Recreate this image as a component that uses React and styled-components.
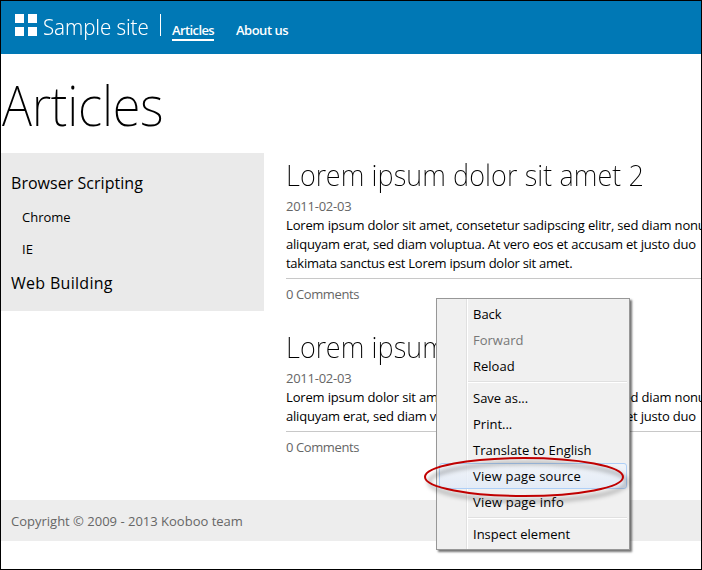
import React from "react";
import styled, { createGlobalStyle } from "styled-components";

const Global = createGlobalStyle`
  *{box-sizing:border-box}
  html,body{margin:0;padding:0}
  body{overflow:hidden;font-family:"Open Sans","Noto Sans",sans-serif;font-size:13px;color:#000}
  h1,h2,p,nav,ul,li{margin:0;padding:0;list-style:none}
`;

const Page = styled.div`
  position:relative;width:702px;height:570px;border:1px solid #000;background:#fff;overflow:hidden;
`;
const Header = styled.header`
  height:53px;background:#0078b5;color:#fff;display:flex;align-items:flex-start;padding:13px 0 0 14px;
`;
const Logo = styled.div`
  display:grid;grid-template-columns:9px 9px;grid-template-rows:9px 9px;gap:4px;
`;
const Tile = styled.i`background:#fff;`;
const SiteName = styled.span`
  width:117px;margin-left:6px;font-family:"Noto Sans","Open Sans",sans-serif;font-size:22px;font-weight:300;
  transform:scaleX(.93);transform-origin:0 0;line-height:24px;letter-spacing:-.1px;white-space:nowrap;
`;
const Divider = styled.span`width:1px;height:22px;background:#fff;`;
const Nav = styled.nav`display:flex;gap:22px;margin:9px 0 0 11px;`;
const NavLink = styled.a`
  height:18px;line-height:15px;font-weight:550;font-size:13px;white-space:nowrap;
  letter-spacing:${p => p.$ls};width:${p => p.$w};
  border-bottom:2px solid ${p => (p.$active ? "#fff" : "transparent")};
`;
const Title = styled.h1`
  height:99px;padding:16px 0 0 1px;font-family:"Noto Sans","Open Sans",sans-serif;font-size:55px;font-weight:200;
  transform:scaleX(.925);transform-origin:0 0;line-height:70px;letter-spacing:-.3px;white-space:nowrap;
`;
const Columns = styled.div`display:flex;height:347px;`;
const Sidebar = styled.ul`
  width:263px;height:158px;flex:none;background:#eaeaea;padding:13px 0 0 10px;
`;
const Category = styled.li`
  height:35px;font-size:16px;line-height:${p => p.$lh};letter-spacing:${p => p.$ls};white-space:nowrap;
`;
const Sub = styled.li`
  font-size:13px;line-height:32px;padding-left:11px;
`;
const Posts = styled.main`width:416px;margin-left:22px;`;
const Post = styled.article`margin-bottom:21px;white-space:nowrap;`;
const PostTitle = styled.h2`
  font-family:"Noto Sans","Open Sans",sans-serif;font-size:29px;line-height:44px;height:44px;font-weight:200;
  transform:scaleX(.937);transform-origin:0 0;letter-spacing:.1px;
`;
const Meta = styled.p`
  color:#666;line-height:19px;letter-spacing:${p => p.$ls};
`;
const Body = styled.p`
  line-height:19px;padding-bottom:5px;border-bottom:1px solid #c8c8c8;margin-bottom:6px;
`;
const Line = styled.span`display:block;letter-spacing:${p => p.$ls};`;
const Footer = styled.footer`
  height:41px;background:#ededed;color:#666;padding-left:10px;line-height:43px;
`;
const Menu = styled.div`
  position:absolute;left:435px;top:297px;width:194px;height:252px;border:1px solid #979797;
  background:linear-gradient(90deg,#f0f0f0 29px,#e0e0e0 29px,#e0e0e0 30px,#fff 30px,#fff 31px,#f0f0f0 31px);
  padding:2px;box-shadow:2px 2px 2px rgba(0,0,0,.55);display:flex;flex-direction:column;
`;
const Item = styled.div`
  height:26px;flex:none;line-height:24px;padding-left:33px;border:1px solid transparent;border-radius:3px;
  font-size:13px;white-space:nowrap;letter-spacing:${p => p.$ls || "0"};
  color:${p => (p.$off ? "#777" : "#000")};
  ${p => p.$hot && "border-color:#aecff7;background:linear-gradient(rgba(240,244,250,.8),rgba(225,234,248,.8));"}
`;
const Separator = styled.div`
  height:2px;margin:2px 0 2px 29px;flex:none;background:linear-gradient(#e0e0e0 50%,#fff 50%);
`;
const Ring = styled.svg`position:absolute;left:414px;top:446px;`;

const posts = [
  {
    title: "Lorem ipsum dolor sit amet 2",
    lines: [
      ["Lorem ipsum dolor sit amet, consetetur sadipscing elitr, sed diam nonu", "-.16px"],
      ["aliquyam erat, sed diam voluptua. At vero eos et accusam et justo duo", "-.21px"],
      ["takimata sanctus est Lorem ipsum dolor sit amet.", "-.26px"],
    ],
  },
  {
    title: "Lorem ipsum",
    lines: [
      ["Lorem ipsum dolor sit amet, consetetur sadipscing elitr, sed diam nonu", "-.16px"],
      ["aliquyam erat, sed diam voluptua. At vero eos et accusam et justo duo", "-.21px"],
    ],
  },
];

export default function App() {
  return (
    <Page>
      <Global />
      <Header>
        <Logo><Tile /><Tile /><Tile /><Tile /></Logo>
        <SiteName>Sample site</SiteName>
        <Divider />
        <Nav>
          <NavLink $active $w="42px" $ls="-.6px">Articles</NavLink>
          <NavLink $ls="-.5px">About us</NavLink>
        </Nav>
      </Header>
      <Title>Articles</Title>
      <Columns>
        <Sidebar>
          <Category $lh="34px" $ls=".04px">Browser Scripting</Category>
          <Sub>Chrome</Sub>
          <Sub>IE</Sub>
          <Category $lh="36px" $ls=".3px">Web Building</Category>
        </Sidebar>
        <Posts>
          {posts.map((post) => (
            <Post key={post.title}>
              <PostTitle>{post.title}</PostTitle>
              <Meta $ls="-.25px">2011-02-03</Meta>
              <Body>
                {post.lines.map(([text, ls]) => <Line key={text} $ls={ls}>{text}</Line>)}
              </Body>
              <Meta $ls="-.4px">0 Comments</Meta>
            </Post>
          ))}
        </Posts>
      </Columns>
      <Footer>Copyright © 2009 - 2013 Kooboo team</Footer>
      <Menu>
        <Item>Back</Item>
        <Item $off>Forward</Item>
        <Item>Reload</Item>
        <Separator />
        <Item>Save as...</Item>
        <Item>Print...</Item>
        <Item>Translate to English</Item>
        <Item $hot $ls=".15px">View page source</Item>
        <Item $ls=".2px">View page info</Item>
        <Separator />
        <Item>Inspect element</Item>
      </Menu>
      <Ring width="226" height="68" viewBox="0 0 226 68">
        <defs>
          <filter id="soft" x="-10%" y="-20%" width="120%" height="150%">
            <feGaussianBlur stdDeviation="2" />
          </filter>
        </defs>
        <ellipse cx="113" cy="35" rx="99" ry="19" fill="none" stroke="#000" strokeOpacity=".3" strokeWidth="3" filter="url(#soft)" />
        <ellipse cx="109" cy="30" rx="99" ry="19" fill="none" stroke="#c00000" strokeWidth="2" />
      </Ring>
    </Page>
  );
}
